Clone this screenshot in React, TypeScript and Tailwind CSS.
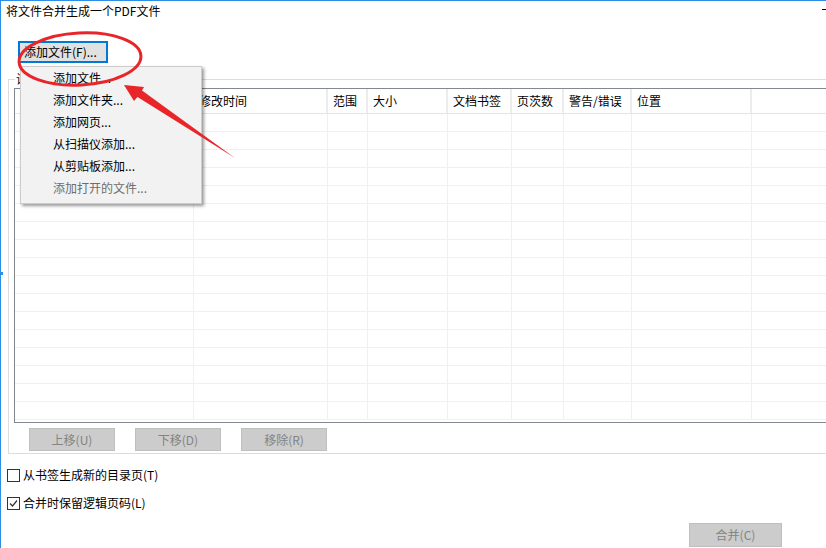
const columns = [
  { label: "", w: "w-[179px]" },
  { label: "修改时间", w: "w-[134px]" },
  { label: "范围", w: "w-[40px]" },
  { label: "大小", w: "w-[80px]" },
  { label: "文档书签", w: "w-[64px]" },
  { label: "页茨数", w: "w-[52px]" },
  { label: "警告/错误", w: "w-[68px]" },
  { label: "位置", w: "w-[120px]" },
  { label: "", w: "w-[200px]" },
];

const menuItems = [
  { label: "添加文件...", disabled: false },
  { label: "添加文件夹...", disabled: false },
  { label: "添加网页...", disabled: false },
  { label: "从扫描仪添加...", disabled: false },
  { label: "从剪贴板添加...", disabled: false },
  { label: "添加打开的文件...", disabled: true },
];

const rows = Array.from({ length: 17 }, (_, i) => i);

function GrayButton({ label, className }: { label: string; className?: string }) {
  return (
    <div
      className={`h-[23px] flex items-center justify-center bg-[#cccccc] border border-[#bfbfbf] text-[#838383] text-[12px] ${className ?? ""}`}
    >
      {label}
    </div>
  );
}

function Checkbox({ label, checked }: { label: string; checked?: boolean }) {
  return (
    <div className="flex items-center h-[20px]">
      <div className="ml-[6px] w-[13px] h-[13px] border border-[#333333] bg-white relative">
        {checked && (
          <svg className="absolute inset-0" width="11" height="11" viewBox="0 0 11 11">
            <path d="M2 5.5 L4.5 8 L9 2.5" fill="none" stroke="#333333" strokeWidth="1.2" />
          </svg>
        )}
      </div>
      <span className="ml-[3px] text-[12px] text-black">{label}</span>
    </div>
  );
}

function FileTable() {
  return (
    <div className="ml-[5px] mt-[8px] border-t border-l border-b border-[#828790] bg-white w-[960px]">
      <div className="flex h-[25px] border-b border-[#e5e5e5]">
        {columns.map((c, i) => (
          <div
            key={i}
            className={`${c.w} shrink-0 border-r-2 border-[#ececec] pl-[5px] flex items-center text-[12px] text-black`}
          >
            {c.label}
          </div>
        ))}
      </div>
      {rows.map((r) => (
        <div key={r} className="flex h-[18px] border-b border-[#f0f0f0]">
          {columns.map((c, i) => (
            <div key={i} className={`${c.w} shrink-0 border-r border-[#f0f0f0]`} />
          ))}
        </div>
      ))}
      <div className="h-[2px]" />
    </div>
  );
}

function AddMenu() {
  return (
    <div className="absolute left-[19px] top-[65px] w-[182px] bg-[#f2f2f2] border border-[#cccccc] shadow-[2px_2px_3px_rgba(0,0,0,0.4)] pb-[4px]">
      {menuItems.map((m) => (
        <div
          key={m.label}
          className={`h-[22px] pl-[32px] flex items-center text-[12px] ${m.disabled ? "text-[#6d6d6d]" : "text-black"}`}
        >
          {m.label}
        </div>
      ))}
    </div>
  );
}

function Annotation() {
  return (
    <svg className="absolute left-0 top-0 pointer-events-none" width="826" height="548" viewBox="0 0 826 548">
      <ellipse
        cx="79"
        cy="58"
        rx="61"
        ry="26"
        transform="rotate(-3 79 58)"
        fill="none"
        stroke="#e8262a"
        strokeWidth="3"
      />
      <polygon points="123,84 143,86 141,89.5 234,157 136.5,96 133,100" fill="#e8262a" />
    </svg>
  );
}

export default function App() {
  return (
    <div className="relative w-[826px] h-[548px] overflow-hidden bg-white border-t border-l border-[#2b8fe6] font-['Microsoft_YaHei','Noto_Sans_CJK_SC',sans-serif] text-black">
      <div className="absolute right-0 top-[8px] w-[4px] h-[1px] bg-black" />
      <div className="absolute left-[-1px] top-[271px] w-[3px] h-[3px] bg-[#2b8fe6]" />

      <div className="pl-[5px] pt-[2px] h-[20px] text-[12px] leading-[16px]">将文件合并生成一个PDF文件</div>

      <div className="ml-[17px] mt-[20px] w-[90px] h-[22px] border-2 border-[#0078d7] bg-[#e1e1e1] flex items-center pl-[4px] text-[12px]">
        添加文件(F)...
      </div>

      <div className="relative ml-[7px] mt-[16px] w-[900px] h-[375px] border border-[#dcdcdc]">
        <div className="absolute left-[6px] top-[-9px] bg-white px-[1px] text-[12px] leading-[16px]">设置</div>
        <FileTable />
        <div className="flex gap-[20px] ml-[20px] mt-[5px]">
          <GrayButton label="上移(U)" className="w-[86px]" />
          <GrayButton label="下移(D)" className="w-[86px]" />
          <GrayButton label="移除(R)" className="w-[86px]" />
        </div>
      </div>

      <div className="mt-[11px] flex flex-col gap-[8px]">
        <Checkbox label="从书签生成新的目录页(T)" />
        <Checkbox label="合并时保留逻辑页码(L)" checked />
      </div>

      <div className="flex justify-end pr-[44px] mt-[10px]">
        <GrayButton label="合并(C)" className="w-[93px] h-[24px]" />
      </div>

      <AddMenu />
      <Annotation />
    </div>
  );
}
